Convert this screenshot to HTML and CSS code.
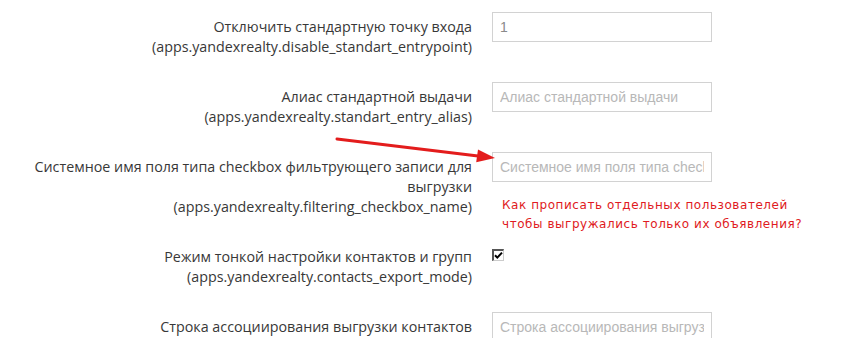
FILE: index.html
```html
<!DOCTYPE html>
<html lang="ru">
<head>
<meta charset="utf-8">
<title>Настройки</title>
<link rel="stylesheet" href="styles.css">
</head>
<body>
<div class="page">
  <form class="form">
    <div class="row">
      <label class="label">Отключить стандартную точку входа<br>(apps.yandexrealty.disable_standart_entrypoint)</label>
      <div class="control"><input class="field field-value" type="text" value="1"></div>
    </div>
    <div class="row">
      <label class="label">Алиас стандартной выдачи<br>(apps.yandexrealty.standart_entry_alias)</label>
      <div class="control"><input class="field" type="text" placeholder="Алиас стандартной выдачи"></div>
    </div>
    <div class="row">
      <label class="label">Системное имя поля типа checkbox фильтрующего записи для выгрузки<br>(apps.yandexrealty.filtering_checkbox_name)</label>
      <div class="control"><input class="field" type="text" placeholder="Системное имя поля типа checkbox"></div>
    </div>
    <div class="row">
      <label class="label">Режим тонкой настройки контактов и групп<br>(apps.yandexrealty.contacts_export_mode)</label>
      <div class="control">
        <span class="check" role="checkbox" aria-checked="true">
          <svg width="9" height="9" viewBox="0 0 9 9"><path d="M1 4.2 L3.3 6.6 L8 1.6" fill="none" stroke="#000" stroke-width="2"/></svg>
        </span>
      </div>
    </div>
    <div class="row">
      <label class="label">Строка ассоциирования выгрузки контактов</label>
      <div class="control"><input class="field" type="text" placeholder="Строка ассоциирования выгрузки контактов"></div>
    </div>
  </form>

  <p class="note">Как прописать отдельных пользователей<br>чтобы выгружались только их объявления?</p>
  <svg class="arrow" width="844" height="338" viewBox="0 0 844 338">
    <path d="M337 139 L478 156" stroke="#e31c1c" stroke-width="3" stroke-linecap="round"/>
    <polygon points="495,158 476.2,162.3 478,149.5" fill="#e31c1c"/>
  </svg>
</div>
</body>
</html>
```
FILE: styles.css
```css
html, body {
  margin: 0;
  padding: 0;
  background: #fff;
}

.page {
  position: relative;
  width: 844px;
  height: 338px;
  overflow: hidden;
}

.form {
  display: flex;
  flex-direction: column;
  gap: 25px;
  padding: 12px 0 0 22px;
}

.row {
  display: flex;
  align-items: flex-start;
  gap: 20px;
}

.label {
  width: 450px;
  flex: none;
  padding-top: 5px;
  text-align: right;
  font-family: "Open Sans", "Noto Sans", sans-serif;
  font-size: 14.3px;
  line-height: 20px;
  color: #383838;
}

.control {
  width: 220px;
  flex: none;
}

.field {
  box-sizing: border-box;
  display: block;
  width: 220px;
  height: 30px;
  margin: 0;
  padding: 0 7px;
  border: 1px solid #d2d2d2;
  border-radius: 0;
  background: #fff;
  font-family: "Liberation Sans", Arial, sans-serif;
  font-size: 14px;
  color: #8a8a8a;
  outline: none;
}

.field::placeholder {
  color: #b8b8b8;
}

.check {
  box-sizing: border-box;
  display: flex;
  align-items: center;
  justify-content: center;
  width: 12px;
  height: 12px;
  margin-top: 7px;
  border-style: solid;
  border-width: 2px 1px 1px 2px;
  border-color: #555 #ccc #ccc #555;
  background: #fff;
}

.note {
  position: absolute;
  left: 502px;
  top: 196px;
  margin: 0;
  font-family: "DejaVu Sans", Verdana, sans-serif;
  font-size: 12px;
  line-height: 19px;
  letter-spacing: 0.55px;
  color: #e01a22;
}

.arrow {
  position: absolute;
  left: 0;
  top: 0;
  pointer-events: none;
}
```
